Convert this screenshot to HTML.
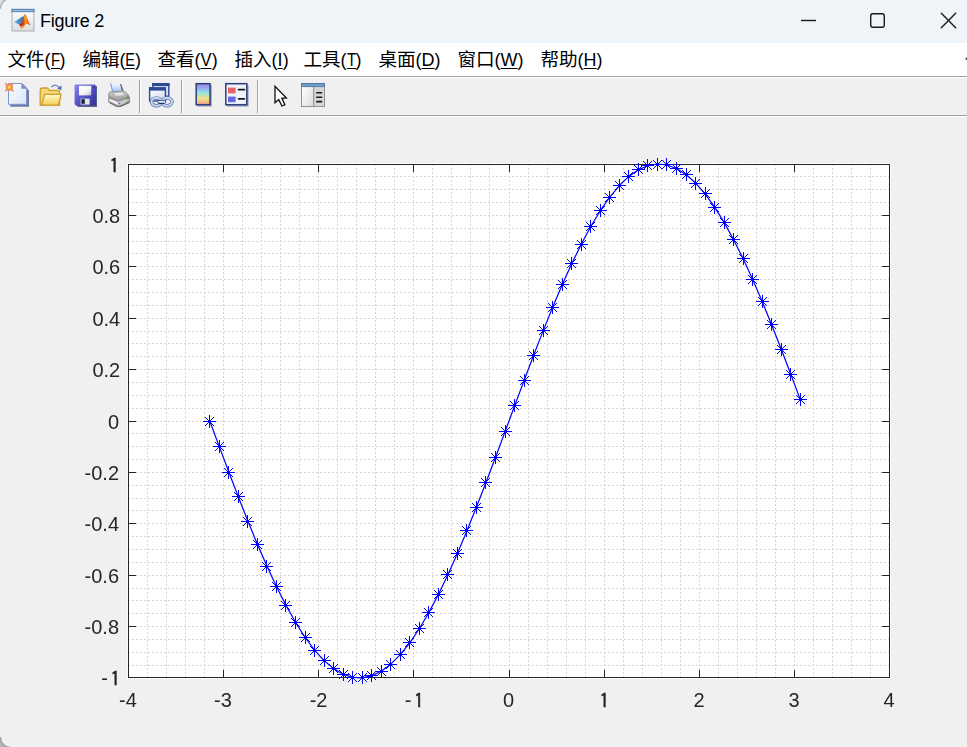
<!DOCTYPE html>
<html lang="zh-CN">
<head>
<meta charset="utf-8">
<title>Figure 2</title>
<style>
html,body{margin:0;padding:0;}
body{width:967px;height:747px;overflow:hidden;background:#f0f0f0;position:relative;font-family:"Liberation Sans","Noto Sans CJK SC",sans-serif;}
#titlebar{position:absolute;left:0;top:0;width:967px;height:43px;background:#eff4f9;}
#title{position:absolute;left:40px;top:9px;font-size:18px;line-height:24px;color:#000;white-space:nowrap;letter-spacing:-0.25px;}
#menubar{position:absolute;left:0;top:43px;width:967px;height:33px;background:#fff;}
.mi{position:absolute;top:4px;margin-left:-0.6px;font-size:18px;line-height:26px;color:#000;white-space:nowrap;transform-origin:0 50%;}
.mi .c{font-size:18.6px;}
.mi u{text-decoration:underline;text-underline-offset:2px;text-decoration-thickness:1px;}
#ln1{position:absolute;left:0;top:76px;width:967px;height:1px;background:#a0a0a0;}
#ln1b{position:absolute;left:0;top:77px;width:967px;height:1px;background:#fff;}
#ln2{position:absolute;left:0;top:115px;width:967px;height:1px;background:#a0a0a0;}
#ln2b{position:absolute;left:0;top:116px;width:967px;height:1px;background:#fff;}
.sep{position:absolute;top:80px;width:1px;height:33px;background:#a0a0a0;}
.sep:after{content:"";position:absolute;left:1px;top:0;width:1px;height:33px;background:#fff;}
svg{position:absolute;left:0;top:0;}
svg.plot{will-change:transform;}
</style>
</head>
<body>
<div id="titlebar"></div>
<div id="title">Figure 2</div>
<div id="menubar">
<span class="mi" style="left:8px"><span class="c">文件</span><span class="l">(<u style="display:inline-block;transform:scaleX(0.82);margin:0 -1.0px">F</u>)</span></span>
<span class="mi" style="left:83px"><span class="c">编辑</span><span class="l">(<u style="display:inline-block;transform:scaleX(0.8);margin:0 -1.3px">E</u>)</span></span>
<span class="mi" style="left:158px"><span class="c">查看</span><span class="l">(<u style="display:inline-block;transform:scaleX(0.92);margin:0 -0.5px">V</u>)</span></span>
<span class="mi" style="left:235px"><span class="c">插入</span><span class="l">(<u>I</u>)</span></span>
<span class="mi" style="left:304px"><span class="c">工具</span><span class="l">(<u style="display:inline-block;transform:scaleX(0.84);margin:0 -1.1px">T</u>)</span></span>
<span class="mi" style="left:379px"><span class="c">桌面</span><span class="l">(<u>D</u>)</span></span>
<span class="mi" style="left:458px"><span class="c">窗口</span><span class="l">(<u>W</u>)</span></span>
<span class="mi" style="left:541px"><span class="c">帮助</span><span class="l">(<u>H</u>)</span></span>
</div>
<div id="ln1"></div><div id="ln1b"></div>
<div id="ln2"></div><div id="ln2b"></div>
<div class="sep" style="left:139px"></div>
<div class="sep" style="left:181px"></div>
<div class="sep" style="left:257px"></div>
<svg class="chrome" width="967" height="747" viewBox="0 0 967 747">
<defs>
<linearGradient id="gFrame" x1="0" y1="0" x2="0" y2="1"><stop offset="0" stop-color="#ffffff"/><stop offset="1" stop-color="#dcdcdc"/></linearGradient>
<linearGradient id="gPeak" x1="0" y1="0" x2="1" y2="0"><stop offset="0" stop-color="#8c1d12"/><stop offset="0.38" stop-color="#d8481c"/><stop offset="0.55" stop-color="#f5921e"/><stop offset="0.8" stop-color="#e8601c"/><stop offset="1" stop-color="#b82a1a"/></linearGradient>
<linearGradient id="gWing" x1="0" y1="0" x2="1" y2="0"><stop offset="0" stop-color="#5fb0e6"/><stop offset="1" stop-color="#2f6fb4"/></linearGradient>
<linearGradient id="gPage" x1="0" y1="0" x2="1" y2="1"><stop offset="0" stop-color="#ffffff"/><stop offset="1" stop-color="#d6e4f8"/></linearGradient>
<linearGradient id="gFolder" x1="0" y1="0" x2="0" y2="1"><stop offset="0" stop-color="#fffad0"/><stop offset="1" stop-color="#f4cc50"/></linearGradient>
<linearGradient id="gSave" x1="0" y1="0" x2="1" y2="1"><stop offset="0" stop-color="#8a8aec"/><stop offset="0.6" stop-color="#4a48c0"/><stop offset="1" stop-color="#34328e"/></linearGradient>
<linearGradient id="gLabel" x1="0" y1="0" x2="1" y2="1"><stop offset="0" stop-color="#ffffff"/><stop offset="0.6" stop-color="#f4f4f8"/><stop offset="1" stop-color="#b8bcd0"/></linearGradient>
<linearGradient id="gPaper" x1="0" y1="0" x2="0" y2="1"><stop offset="0" stop-color="#f4f8ff"/><stop offset="1" stop-color="#a4c6f6"/></linearGradient>
<linearGradient id="gPrn" x1="0" y1="0" x2="0" y2="1"><stop offset="0" stop-color="#d0d0d0"/><stop offset="0.45" stop-color="#a6a6a6"/><stop offset="1" stop-color="#cfcfcf"/></linearGradient>
<linearGradient id="gCbar" x1="0" y1="0" x2="0" y2="1"><stop offset="0" stop-color="#9c8ce8"/><stop offset="0.18" stop-color="#96a4ec"/><stop offset="0.42" stop-color="#92e4e6"/><stop offset="0.7" stop-color="#f0e486"/><stop offset="1" stop-color="#f2a08c"/></linearGradient>
<linearGradient id="gWin" x1="0" y1="0" x2="1" y2="1"><stop offset="0" stop-color="#ffffff"/><stop offset="1" stop-color="#d0d8ec"/></linearGradient>
<linearGradient id="gPanel" x1="0" y1="0" x2="1" y2="1"><stop offset="0" stop-color="#ffffff"/><stop offset="1" stop-color="#dcdcdc"/></linearGradient>
</defs>

<!-- window corner -->
<path d="M0 0H6.5A10.1 10.1 0 0 0 0.5 9V0Z" fill="#d9d9d9"/>
<circle cx="10.6" cy="8.65" r="10.1" fill="none" stroke="#adadad" stroke-width="1.3" clip-path="url(#cpTL)"/>
<path d="M0 747V736A10.1 10.1 0 0 0 8.5 747Z" fill="#b4b4b4"/>
<circle cx="10.6" cy="737.4" r="9" fill="none" stroke="#f9f9f9" stroke-width="1" clip-path="url(#cpBL)"/>
<circle cx="10.6" cy="737.4" r="10.1" fill="none" stroke="#a4a4a4" stroke-width="1.5" clip-path="url(#cpBL)"/>
<clipPath id="cpBL"><rect x="0" y="737" width="10.6" height="10"/></clipPath>
<clipPath id="cpTL"><rect x="0" y="0" width="10.6" height="8.65"/></clipPath>

<!-- MATLAB title icon -->
<g>
<rect x="12" y="9.5" width="22" height="21.5" fill="url(#gFrame)" stroke="#a9aeb4" stroke-width="1"/>
<rect x="12" y="9.3" width="22" height="2.4" fill="#8fc0e6" stroke="#4f7aa6" stroke-width="0.9"/>
<path d="M14.2 22.1 L22.8 16.2 L24.2 17 L21.5 22.5 L19.2 24.8 Z" fill="url(#gWing)"/>
<path d="M19.2 24.8 L21.5 22.5 L23.4 17.6 Q24.4 14.1 25 14.1 Q26 14.1 27 17.4 Q28.8 23 30.5 25.6 Q28.6 24.4 27.4 23.6 Q25.6 24 24 26.2 Q22.6 28.2 21.5 28.6 Q20.2 26.6 19.2 24.8Z" fill="url(#gPeak)"/>
<path d="M24.6 15.6 Q25.4 15.2 25.5 17.4 Q25.5 19.2 24.9 19.6 Q24.3 18 24.6 15.6Z" fill="#f8d028"/>
<path d="M20.8 26.4 Q22.4 25.6 23.6 25.2 Q22.6 27.6 21.5 28.5Z" fill="#f8c824"/>
</g>

<!-- window controls -->
<g fill="none" stroke="#1a1a1a" stroke-width="1.4">
<path d="M801 20.5H816"/>
<rect x="870.7" y="13.7" width="13.6" height="13.6" rx="2.2"/>
<path d="M941.3 13.3L955.7 27.7M955.7 13.3L941.3 27.7" stroke-linecap="round"/>
</g>
<rect x="965.6" y="57.8" width="1.4" height="2" fill="#333"/>

<!-- new file -->
<g>
<path d="M10.2 85.2H23.6L29 90.6V106.8H10.2Z" fill="#6f7aa0"/>
<path d="M8.5 83.5H21.8L26.6 88.3V104.3H8.5Z" fill="url(#gPage)" stroke="#7c96d6" stroke-width="1"/>
<path d="M21.8 83.5V88.3H26.6Z" fill="#8a92c8" stroke="#6f78b4" stroke-width="0.7" stroke-linejoin="round"/>
<g stroke="#e8845a" stroke-width="1.3" stroke-linecap="round"><path d="M5.6 83.4L13.2 91M13.2 83.4L5.6 91"/></g>
<circle cx="9.4" cy="87.2" r="3.7" fill="#ec8c60"/>
<rect x="7.9" y="85.7" width="3" height="3" fill="#f6d650"/>
</g>

<!-- open folder -->
<g>
<path d="M40.2 105V90.4Q40.2 88 42.4 88H47.4L49.6 90.4H57.6Q59.6 90.4 59.6 92.6V105Z" fill="#f2d878" stroke="#c9a02c" stroke-width="1.3" stroke-linejoin="round"/>
<path d="M41.4 105.2L44.6 94.4H61.2L58.2 105.2Z" fill="url(#gFolder)" stroke="#c9a02c" stroke-width="1.3" stroke-linejoin="round"/>
<path d="M51.4 87.2Q55.2 82.8 59.2 87.4" fill="none" stroke="#6484be" stroke-width="1.2"/>
<path d="M61.6 85.4L61.2 90.2L57.2 88.4Z" fill="#4a6cb0"/>
</g>

<!-- save -->
<g>
<path d="M76 86H97V107H78L76 105Z" fill="#2a3c6c" opacity="0.75"/>
<path d="M74.6 84.4H94.6L96.2 86V105.6H76L74.6 104.2Z" fill="url(#gSave)"/>
<rect x="79" y="85.8" width="12.2" height="9.6" fill="url(#gLabel)"/>
<rect x="80.6" y="98.6" width="9" height="6" fill="#e2e4ec"/>
<rect x="81.4" y="99.2" width="3.4" height="4.6" fill="#1c2030"/>
<rect x="93.4" y="86.6" width="1.4" height="1.6" fill="#2a2a70"/>
</g>

<!-- print -->
<g>
<path d="M119.6 83.6L121.4 84.4L123.6 90.6L121.6 91.6Z" fill="#6a6a72"/>
<path d="M110 83.2H119.6L121.8 91.2L112.2 91.8Z" fill="url(#gPaper)"/>
<path d="M110 83.2H111.2L113.2 91.7L112.2 91.8Z" fill="#8c96d4"/>
<path d="M108.8 94.2Q108.8 92 111 91.8L122.6 91Q125.4 91.4 127.8 94.2Q129.6 96.4 129.6 98.6V102.6L121 106.4Q118.4 107.2 116 106.2L108.8 102.2Z" fill="url(#gPrn)" stroke="#868686" stroke-width="0.9"/>
<path d="M126.6 94.6Q129.2 96.6 129.2 99V102.4L126.4 103.6Z" fill="#8a8a8a"/>
<path d="M109.4 97.2L118.2 100.6L128.8 96.8" fill="none" stroke="#7e7e7e" stroke-width="0.9"/>
<path d="M109.6 99L117.6 102.6L117.6 104.6L109.6 101Z" fill="#f6f6f6"/>
<path d="M118.4 102.8L128.6 99V100.8L118.4 104.8Z" fill="#d2d2d2"/>
<path d="M110 102.6L116.4 105.9Q118.6 106.8 121 105.9L128.4 102.6" fill="none" stroke="#6e6e6e" stroke-width="1.3"/>
<path d="M112.4 92.8L121.6 92.2L125 95.2L116.4 96.2Z" fill="#e4e4e4" stroke="#a4a4a4" stroke-width="0.5"/>
<rect x="125.2" y="97" width="1.5" height="2.2" fill="#5cb84c"/>
<rect x="118.6" y="102.8" width="1.6" height="1.4" fill="#5c68cc"/>
</g>

<!-- link plots -->
<g>
<rect x="152.8" y="83.7" width="16" height="12.6" fill="url(#gWin)" stroke="#2f4a94" stroke-width="1.4"/>
<rect x="152.2" y="83" width="17.2" height="3.2" fill="#2f4a94"/>
<rect x="149.6" y="88" width="15.8" height="13" fill="url(#gWin)" stroke="#2f4a94" stroke-width="1.4"/>
<rect x="149" y="87.2" width="17" height="3.4" fill="#2f4a94"/>
<ellipse cx="156.4" cy="101.8" rx="4.9" ry="3.9" fill="none" stroke="#5870ac" stroke-width="3.5"/>
<ellipse cx="167" cy="101.8" rx="4.9" ry="3.9" fill="none" stroke="#5870ac" stroke-width="3.5"/>
<ellipse cx="156.4" cy="101.8" rx="4.9" ry="3.9" fill="none" stroke="#c8d4ec" stroke-width="2.1"/>
<ellipse cx="167" cy="101.8" rx="4.9" ry="3.9" fill="none" stroke="#c8d4ec" stroke-width="2.1"/>
<rect x="157.6" y="100.4" width="8.2" height="2.8" rx="1.4" fill="#e4ecfa" stroke="#2f4a94" stroke-width="0.9"/>
<rect x="158.6" y="103.1" width="5.4" height="1" fill="#1c2c5c"/>
</g>

<!-- colorbar -->
<g>
<rect x="197.2" y="85" width="14.6" height="21.6" fill="#5a6488" opacity="0.55"/>
<rect x="196.2" y="83.7" width="13.8" height="21" fill="url(#gCbar)" stroke="#2c3f7c" stroke-width="1.5"/>
</g>

<!-- legend -->
<g>
<rect x="226.8" y="85" width="21.8" height="21.6" fill="#5a6488" opacity="0.55"/>
<rect x="225.8" y="83.7" width="21" height="21" fill="#eef2fa" stroke="#2c3f7c" stroke-width="1.5"/>
<rect x="228" y="87.6" width="7.6" height="5.8" fill="#e86464"/>
<rect x="228" y="96.6" width="7.6" height="5.6" fill="#6868e4"/>
<path d="M238.6 89.7H244.4M238.6 98.8H244.4" stroke="#1a1a1a" stroke-width="1.7" stroke-linecap="round"/>
</g>

<!-- cursor -->
<path d="M275 86.4V102.8L278.8 99.6L281.9 106L284.9 104.7L281.9 98.3L286.4 98Z" fill="#fff" stroke="#111" stroke-width="1.3" stroke-linejoin="miter"/>

<!-- property inspector -->
<g>
<rect x="301.5" y="83.5" width="23" height="23" fill="#d6d6d6" stroke="#8c9298" stroke-width="1"/>
<rect x="302" y="87" width="11" height="19" fill="url(#gPanel)"/>
<rect x="313" y="87" width="1.2" height="19" fill="#9a9a9a"/>
<rect x="301.5" y="83.5" width="23" height="3.2" fill="#6e9cc6" stroke="#4a76a2" stroke-width="0.8"/>
<path d="M316.2 92.8H322.2M316.2 97.2H322.2M316.2 101.6H322.2" stroke="#1a1a1a" stroke-width="1.6"/>
</g>
</svg>

<svg class="plot" width="967" height="747" viewBox="0 0 967 747">
<rect x="127.0" y="163.0" width="764.0" height="516.0" fill="#fbfbfb"/>
<rect x="128.0" y="164.0" width="762.0" height="514.0" fill="#fff"/>
<g shape-rendering="crispEdges" fill="none" stroke-width="1">
<path d="M147.5 164.0V677.0M166.5 164.0V677.0M185.5 164.0V677.0M204.5 164.0V677.0M223.5 164.0V677.0M242.5 164.0V677.0M261.5 164.0V677.0M280.5 164.0V677.0M299.5 164.0V677.0M318.5 164.0V677.0M337.5 164.0V677.0M356.5 164.0V677.0M375.5 164.0V677.0M394.5 164.0V677.0M413.5 164.0V677.0M432.5 164.0V677.0M451.5 164.0V677.0M470.5 164.0V677.0M489.5 164.0V677.0M509.5 164.0V677.0M528.5 164.0V677.0M547.5 164.0V677.0M566.5 164.0V677.0M585.5 164.0V677.0M604.5 164.0V677.0M623.5 164.0V677.0M642.5 164.0V677.0M661.5 164.0V677.0M680.5 164.0V677.0M699.5 164.0V677.0M718.5 164.0V677.0M737.5 164.0V677.0M756.5 164.0V677.0M775.5 164.0V677.0M794.5 164.0V677.0M813.5 164.0V677.0M832.5 164.0V677.0M851.5 164.0V677.0M870.5 164.0V677.0" stroke="#d6d6d6" stroke-dasharray="2 2"/>
<path d="M128.0 176.5H889.0M128.0 189.5H889.0M128.0 202.5H889.0M128.0 215.5H889.0M128.0 228.5H889.0M128.0 241.5H889.0M128.0 253.5H889.0M128.0 266.5H889.0M128.0 279.5H889.0M128.0 292.5H889.0M128.0 305.5H889.0M128.0 318.5H889.0M128.0 331.5H889.0M128.0 343.5H889.0M128.0 356.5H889.0M128.0 369.5H889.0M128.0 382.5H889.0M128.0 395.5H889.0M128.0 408.5H889.0M128.0 421.5H889.0M128.0 433.5H889.0M128.0 446.5H889.0M128.0 459.5H889.0M128.0 472.5H889.0M128.0 485.5H889.0M128.0 498.5H889.0M128.0 510.5H889.0M128.0 523.5H889.0M128.0 536.5H889.0M128.0 549.5H889.0M128.0 562.5H889.0M128.0 575.5H889.0M128.0 588.5H889.0M128.0 600.5H889.0M128.0 613.5H889.0M128.0 626.5H889.0M128.0 639.5H889.0M128.0 652.5H889.0M128.0 665.5H889.0" stroke="#d6d6d6" stroke-dasharray="2 2"/>
<path d="M223.5 677.0v-7M223.5 165.0v7M318.5 677.0v-7M318.5 165.0v7M413.5 677.0v-7M413.5 165.0v7M509.5 677.0v-7M509.5 165.0v7M604.5 677.0v-7M604.5 165.0v7M699.5 677.0v-7M699.5 165.0v7M794.5 677.0v-7M794.5 165.0v7M129.0 215.5h7M889.0 215.5h-7M129.0 266.5h7M889.0 266.5h-7M129.0 318.5h7M889.0 318.5h-7M129.0 369.5h7M889.0 369.5h-7M129.0 421.5h7M889.0 421.5h-7M129.0 472.5h7M889.0 472.5h-7M129.0 523.5h7M889.0 523.5h-7M129.0 575.5h7M889.0 575.5h-7M129.0 626.5h7M889.0 626.5h-7" stroke="#262626"/>
<rect x="128.5" y="164.5" width="761.0" height="513.0" stroke="#262626"/>
</g>
<path d="M209.76 421.00L219.29 446.66L228.81 472.06L238.34 496.95L247.86 521.08L257.39 544.21L266.91 566.11L276.44 586.56L285.96 605.36L295.49 622.32L305.01 637.26L314.54 650.04L324.06 660.53L333.59 668.63L343.11 674.26L352.64 677.36L362.16 677.89L371.69 675.86L381.21 671.28L390.74 664.20L400.26 654.69L409.79 642.84L419.31 628.78L428.84 612.65L438.36 594.59L447.89 574.81L457.41 553.48L466.94 530.84L476.46 507.09L485.99 482.49L495.51 457.27L505.04 431.69L514.56 406.00L524.09 380.46L533.61 355.33L543.14 330.85L552.66 307.27L562.19 284.83L571.71 263.75L581.24 244.24L590.76 226.50L600.29 210.70L609.81 197.01L619.34 185.55L628.86 176.44L638.39 169.77L647.91 165.62L657.44 164.02L666.96 164.99L676.49 168.51L686.01 174.56L695.54 183.07L705.06 193.95L714.59 207.11L724.11 222.40L733.64 239.68L743.16 258.76L752.69 279.47L762.21 301.60L771.74 324.91L781.26 349.19L790.79 374.18L800.31 399.65" stroke="#0000ff" stroke-width="1.2" fill="none" stroke-linejoin="round"/>
<path d="M203.0 421.5h13.0M209.5 415.0v13.0M213.0 446.5h13.0M219.5 440.0v13.0M222.0 472.5h13.0M228.5 466.0v13.0M232.0 496.5h13.0M238.5 490.0v13.0M241.0 521.5h13.0M247.5 515.0v13.0M251.0 544.5h13.0M257.5 538.0v13.0M260.0 566.5h13.0M266.5 560.0v13.0M270.0 586.5h13.0M276.5 580.0v13.0M279.0 605.5h13.0M285.5 599.0v13.0M289.0 622.5h13.0M295.5 616.0v13.0M299.0 637.5h13.0M305.5 631.0v13.0M308.0 650.5h13.0M314.5 644.0v13.0M318.0 660.5h13.0M324.5 654.0v13.0M327.0 668.5h13.0M333.5 662.0v13.0M337.0 674.5h13.0M343.5 668.0v13.0M346.0 677.5h13.0M352.5 671.0v13.0M356.0 677.5h13.0M362.5 671.0v13.0M365.0 675.5h13.0M371.5 669.0v13.0M375.0 671.5h13.0M381.5 665.0v13.0M384.0 664.5h13.0M390.5 658.0v13.0M394.0 654.5h13.0M400.5 648.0v13.0M403.0 642.5h13.0M409.5 636.0v13.0M413.0 628.5h13.0M419.5 622.0v13.0M422.0 612.5h13.0M428.5 606.0v13.0M432.0 594.5h13.0M438.5 588.0v13.0M441.0 574.5h13.0M447.5 568.0v13.0M451.0 553.5h13.0M457.5 547.0v13.0M460.0 530.5h13.0M466.5 524.0v13.0M470.0 507.5h13.0M476.5 501.0v13.0M479.0 482.5h13.0M485.5 476.0v13.0M489.0 457.5h13.0M495.5 451.0v13.0M499.0 431.5h13.0M505.5 425.0v13.0M508.0 405.5h13.0M514.5 399.0v13.0M518.0 380.5h13.0M524.5 374.0v13.0M527.0 355.5h13.0M533.5 349.0v13.0M537.0 330.5h13.0M543.5 324.0v13.0M546.0 307.5h13.0M552.5 301.0v13.0M556.0 284.5h13.0M562.5 278.0v13.0M565.0 263.5h13.0M571.5 257.0v13.0M575.0 244.5h13.0M581.5 238.0v13.0M584.0 226.5h13.0M590.5 220.0v13.0M594.0 210.5h13.0M600.5 204.0v13.0M603.0 197.5h13.0M609.5 191.0v13.0M613.0 185.5h13.0M619.5 179.0v13.0M622.0 176.5h13.0M628.5 170.0v13.0M632.0 169.5h13.0M638.5 163.0v13.0M641.0 165.5h13.0M647.5 159.0v13.0M651.0 164.5h13.0M657.5 158.0v13.0M660.0 164.5h13.0M666.5 158.0v13.0M670.0 168.5h13.0M676.5 162.0v13.0M680.0 174.5h13.0M686.5 168.0v13.0M689.0 183.5h13.0M695.5 177.0v13.0M699.0 193.5h13.0M705.5 187.0v13.0M708.0 207.5h13.0M714.5 201.0v13.0M718.0 222.5h13.0M724.5 216.0v13.0M727.0 239.5h13.0M733.5 233.0v13.0M737.0 258.5h13.0M743.5 252.0v13.0M746.0 279.5h13.0M752.5 273.0v13.0M756.0 301.5h13.0M762.5 295.0v13.0M765.0 324.5h13.0M771.5 318.0v13.0M775.0 349.5h13.0M781.5 343.0v13.0M784.0 374.5h13.0M790.5 368.0v13.0M794.0 399.5h13.0M800.5 393.0v13.0" stroke="#0000ff" stroke-width="1" fill="none" shape-rendering="crispEdges"/>
<path d="M205.00 417.00l9.00 9.00M205.00 426.00l9.00 -9.00M215.00 442.00l9.00 9.00M215.00 451.00l9.00 -9.00M224.00 468.00l9.00 9.00M224.00 477.00l9.00 -9.00M234.00 492.00l9.00 9.00M234.00 501.00l9.00 -9.00M243.00 517.00l9.00 9.00M243.00 526.00l9.00 -9.00M253.00 540.00l9.00 9.00M253.00 549.00l9.00 -9.00M262.00 562.00l9.00 9.00M262.00 571.00l9.00 -9.00M272.00 582.00l9.00 9.00M272.00 591.00l9.00 -9.00M281.00 601.00l9.00 9.00M281.00 610.00l9.00 -9.00M291.00 618.00l9.00 9.00M291.00 627.00l9.00 -9.00M301.00 633.00l9.00 9.00M301.00 642.00l9.00 -9.00M310.00 646.00l9.00 9.00M310.00 655.00l9.00 -9.00M320.00 656.00l9.00 9.00M320.00 665.00l9.00 -9.00M329.00 664.00l9.00 9.00M329.00 673.00l9.00 -9.00M339.00 670.00l9.00 9.00M339.00 679.00l9.00 -9.00M348.00 673.00l9.00 9.00M348.00 682.00l9.00 -9.00M358.00 673.00l9.00 9.00M358.00 682.00l9.00 -9.00M367.00 671.00l9.00 9.00M367.00 680.00l9.00 -9.00M377.00 667.00l9.00 9.00M377.00 676.00l9.00 -9.00M386.00 660.00l9.00 9.00M386.00 669.00l9.00 -9.00M396.00 650.00l9.00 9.00M396.00 659.00l9.00 -9.00M405.00 638.00l9.00 9.00M405.00 647.00l9.00 -9.00M415.00 624.00l9.00 9.00M415.00 633.00l9.00 -9.00M424.00 608.00l9.00 9.00M424.00 617.00l9.00 -9.00M434.00 590.00l9.00 9.00M434.00 599.00l9.00 -9.00M443.00 570.00l9.00 9.00M443.00 579.00l9.00 -9.00M453.00 549.00l9.00 9.00M453.00 558.00l9.00 -9.00M462.00 526.00l9.00 9.00M462.00 535.00l9.00 -9.00M472.00 503.00l9.00 9.00M472.00 512.00l9.00 -9.00M481.00 478.00l9.00 9.00M481.00 487.00l9.00 -9.00M491.00 453.00l9.00 9.00M491.00 462.00l9.00 -9.00M501.00 427.00l9.00 9.00M501.00 436.00l9.00 -9.00M510.00 401.00l9.00 9.00M510.00 410.00l9.00 -9.00M520.00 376.00l9.00 9.00M520.00 385.00l9.00 -9.00M529.00 351.00l9.00 9.00M529.00 360.00l9.00 -9.00M539.00 326.00l9.00 9.00M539.00 335.00l9.00 -9.00M548.00 303.00l9.00 9.00M548.00 312.00l9.00 -9.00M558.00 280.00l9.00 9.00M558.00 289.00l9.00 -9.00M567.00 259.00l9.00 9.00M567.00 268.00l9.00 -9.00M577.00 240.00l9.00 9.00M577.00 249.00l9.00 -9.00M586.00 222.00l9.00 9.00M586.00 231.00l9.00 -9.00M596.00 206.00l9.00 9.00M596.00 215.00l9.00 -9.00M605.00 193.00l9.00 9.00M605.00 202.00l9.00 -9.00M615.00 181.00l9.00 9.00M615.00 190.00l9.00 -9.00M624.00 172.00l9.00 9.00M624.00 181.00l9.00 -9.00M634.00 165.00l9.00 9.00M634.00 174.00l9.00 -9.00M643.00 161.00l9.00 9.00M643.00 170.00l9.00 -9.00M653.00 160.00l9.00 9.00M653.00 169.00l9.00 -9.00M662.00 160.00l9.00 9.00M662.00 169.00l9.00 -9.00M672.00 164.00l9.00 9.00M672.00 173.00l9.00 -9.00M682.00 170.00l9.00 9.00M682.00 179.00l9.00 -9.00M691.00 179.00l9.00 9.00M691.00 188.00l9.00 -9.00M701.00 189.00l9.00 9.00M701.00 198.00l9.00 -9.00M710.00 203.00l9.00 9.00M710.00 212.00l9.00 -9.00M720.00 218.00l9.00 9.00M720.00 227.00l9.00 -9.00M729.00 235.00l9.00 9.00M729.00 244.00l9.00 -9.00M739.00 254.00l9.00 9.00M739.00 263.00l9.00 -9.00M748.00 275.00l9.00 9.00M748.00 284.00l9.00 -9.00M758.00 297.00l9.00 9.00M758.00 306.00l9.00 -9.00M767.00 320.00l9.00 9.00M767.00 329.00l9.00 -9.00M777.00 345.00l9.00 9.00M777.00 354.00l9.00 -9.00M786.00 370.00l9.00 9.00M786.00 379.00l9.00 -9.00M796.00 395.00l9.00 9.00M796.00 404.00l9.00 -9.00" stroke="#0000ff" stroke-width="1" fill="none"/>
<g font-family="'Liberation Sans', Arial, sans-serif" font-size="20" fill="#262626">
<text transform="translate(128.00 707.2) scale(1 1.04)" text-anchor="middle">-4</text>
<text transform="translate(223.00 707.2) scale(1 1.04)" text-anchor="middle">-3</text>
<text transform="translate(318.60 707.2) scale(1 1.04)" text-anchor="middle">-2</text>
<text transform="translate(414.25 707.2) scale(1 1.04)" text-anchor="middle">-<tspan font-family="IPAGothic, 'Liberation Sans', sans-serif" font-size="19.4" stroke="#262626" stroke-width="0.45" dy="0.8" dx="2.5">1</tspan></text>
<text transform="translate(508.60 707.2) scale(1 1.04)" text-anchor="middle">0</text>
<text transform="translate(604.30 707.2) scale(1 1.04)" text-anchor="middle"><tspan font-family="IPAGothic, 'Liberation Sans', sans-serif" font-size="19.4" stroke="#262626" stroke-width="0.45" dy="0.8">1</tspan></text>
<text transform="translate(699.00 707.2) scale(1 1.04)" text-anchor="middle">2</text>
<text transform="translate(794.00 707.2) scale(1 1.04)" text-anchor="middle">3</text>
<text transform="translate(889.00 707.2) scale(1 1.04)" text-anchor="middle">4</text>
<text transform="translate(119.3 171.7) scale(1 1.04)" text-anchor="end"><tspan font-family="IPAGothic, 'Liberation Sans', sans-serif" font-size="19.4" stroke="#262626" stroke-width="0.45" dy="0.8">1</tspan></text>
<text transform="translate(120.2 222.7) scale(1 1.04)" text-anchor="end">0.8</text>
<text transform="translate(120.2 273.7) scale(1 1.04)" text-anchor="end">0.6</text>
<text transform="translate(120.2 325.7) scale(1 1.04)" text-anchor="end">0.4</text>
<text transform="translate(120.2 376.7) scale(1 1.04)" text-anchor="end">0.2</text>
<text transform="translate(119 428.7) scale(1 1.04)" text-anchor="end">0</text>
<text transform="translate(119 479.7) scale(1 1.04)" text-anchor="end">-0.2</text>
<text transform="translate(119 530.7) scale(1 1.04)" text-anchor="end">-0.4</text>
<text transform="translate(119 582.7) scale(1 1.04)" text-anchor="end">-0.6</text>
<text transform="translate(119 633.7) scale(1 1.04)" text-anchor="end">-0.8</text>
<text transform="translate(120.2 684.7) scale(1 1.04)" text-anchor="end">-<tspan font-family="IPAGothic, 'Liberation Sans', sans-serif" font-size="19.4" stroke="#262626" stroke-width="0.45" dy="0.8" dx="2.7">1</tspan></text>
</g>
</svg>
</body>
</html>
